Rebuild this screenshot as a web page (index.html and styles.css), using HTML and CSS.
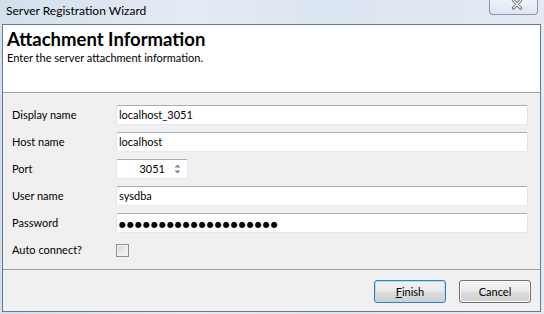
FILE: index.html
```html
<!DOCTYPE html>
<html>
<head>
<meta charset="utf-8">
<link rel="stylesheet" href="styles.css">
</head>
<body>
<div class="window">
  <div class="titlebar">
    <span class="title">Server Registration Wizard</span>
    <div class="close">
      <svg width="12" height="11" viewBox="0 0 12 11">
        <path d="M2.5 1.5 L9.5 9 M9.5 1.5 L2.5 9" stroke="#5d646e" stroke-width="3.2" stroke-linecap="round" fill="none"/>
        <path d="M2.5 1.5 L9.5 9 M9.5 1.5 L2.5 9" stroke="#ffffff" stroke-width="1.3" stroke-linecap="round" fill="none"/>
      </svg>
    </div>
  </div>
  <div class="client">
    <div class="header">
      <div class="h-title">Attachment Information</div>
      <div class="h-sub">Enter the server attachment information.</div>
    </div>
    <div class="form">
      <label class="lbl">Display name</label>
      <div class="field">localhost_3051</div>
      <label class="lbl">Host name</label>
      <div class="field">localhost</div>
      <label class="lbl">Port</label>
      <div class="field port">
        <span class="port-val">3051</span>
        <span class="spin">
          <svg width="7" height="12" viewBox="0 0 7 12">
            <path d="M3.5 1.5 L6.5 4.5 L0.5 4.5 Z" fill="#7484a0"/>
            <path d="M0.5 7.5 L6.5 7.5 L3.5 10.5 Z" fill="#7484a0"/>
          </svg>
        </span>
      </div>
      <label class="lbl">User name</label>
      <div class="field">sysdba</div>
      <label class="lbl">Password</label>
      <div class="field"><span class="dots">●●●●●●●●●●●●●●●●●●●●</span></div>
      <label class="lbl">Auto connect?</label>
      <div class="checkcell"><span class="check"></span></div>
    </div>
    <div class="footer">
      <button class="btn default"><u>F</u>inish</button>
      <button class="btn">Cancel</button>
    </div>
  </div>
</div>
</body>
</html>
```
FILE: styles.css
```css
html, body {
  margin: 0;
  padding: 0;
}
body {
  width: 544px;
  height: 314px;
  overflow: hidden;
  font-family: "Lato", "Liberation Sans", sans-serif;
  font-size: 11px;
  color: #000;
}
.window {
  width: 544px;
  height: 314px;
  display: flex;
  flex-direction: column;
  background: linear-gradient(90deg, #d3dfed 0%, #e4ebf5 35%, #dbe5f1 60%, #e3eaf4 100%);
}
.titlebar {
  height: 24px;
  display: flex;
  align-items: flex-start;
}
.title {
  padding-left: 6px;
  line-height: 16px;
  padding-top: 3px;
  font-size: 12px;
  color: #000;
}
.close {
  margin-left: auto;
  margin-right: 6px;
  width: 41px;
  height: 14px;
  border: 1px solid #8b97a8;
  border-top: none;
  border-radius: 0 0 4px 4px;
  background: linear-gradient(#eef3f9, #dce5f0);
  display: flex;
  justify-content: center;
  padding-left: 6px;
  box-sizing: content-box;
}
.close svg {
  display: block;
  margin-top: -1px;
}
.client {
  flex: 1;
  margin: 0 3px 2px 2px;
  border: 1px solid #6c7886;
  display: flex;
  flex-direction: column;
  background: #f0f0f0;
}
.header {
  height: 67px;
  background: #fff;
  border-bottom: 1px solid #a0a0a0;
  padding-left: 4px;
  box-sizing: content-box;
}
.h-title {
  font-weight: bold;
  font-size: 18.5px;
  line-height: 20px;
  padding-top: 4px;
}
.h-sub {
  font-size: 11px;
  line-height: 16px;
  margin-top: 1px;
}
.form {
  border-bottom: 1px solid #a0a0a0;
  box-sizing: content-box;
  padding: 12px 12px 0 9px;
  height: 164px;
  display: grid;
  grid-template-columns: 104px 1fr;
  grid-auto-rows: 20px;
  row-gap: 7px;
  align-items: center;
}
.lbl {
  font-size: 11px;
  line-height: 20px;
}
.field {
  height: 20px;
  box-sizing: border-box;
  background: #fff;
  border: 1px solid #e2e3ea;
  border-top-color: #abadb3;
  border-bottom-color: #e3e9ef;
  border-radius: 2px;
  padding-left: 2px;
  font-size: 11px;
  line-height: 18px;
  white-space: nowrap;
  overflow: hidden;
}
.port {
  width: 72px;
  display: flex;
  align-items: center;
}
.port-val {
  flex: 1;
  text-align: right;
  padding-right: 9px;
}
.spin {
  width: 13px;
  display: flex;
  align-items: center;
}
.spin svg {
  display: block;
}
.dots {
  font-family: "DejaVu Sans", sans-serif;
  font-size: 8px;
  letter-spacing: 1px;
}
.checkcell {
  display: flex;
  align-items: center;
}
.check {
  width: 13px;
  height: 13px;
  box-sizing: border-box;
  border: 1px solid #8e8f8f;
  background: linear-gradient(135deg, #d8d8d8, #f6f6f6);
  box-shadow: inset 0 0 0 1px #f4f4f4;
}
.footer {
  flex: 1;
  display: flex;
  justify-content: flex-end;
  align-items: flex-start;
  gap: 13px;
  padding: 10px 9px 0 0;
}
.btn {
  width: 72px;
  height: 23px;
  margin: 0;
  padding: 0;
  border: 1px solid #707070;
  border-radius: 3px;
  background: linear-gradient(#f2f2f2 0%, #ebebeb 48%, #dddddd 52%, #cfcfcf 100%);
  box-shadow: inset 0 0 0 1px #fbfbfb;
  font-family: "Lato", "Liberation Sans", sans-serif;
  font-size: 11px;
  color: #000;
  line-height: 20px;
}
.btn.default {
  border-color: #3c7fb1;
  box-shadow: inset 0 0 0 1px #a9dcf6;
}
.btn u {
  text-decoration: underline;
}
```
